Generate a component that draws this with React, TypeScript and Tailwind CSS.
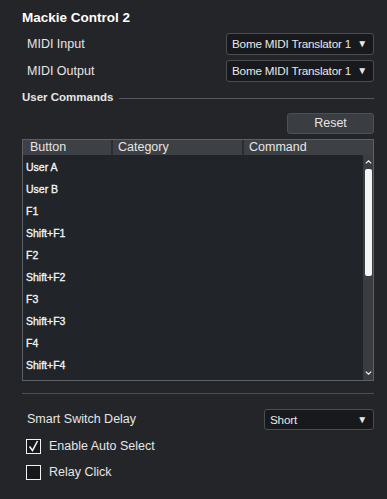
import React from 'react';

const rows = ['User A', 'User B', 'F1', 'Shift+F1', 'F2', 'Shift+F2', 'F3', 'Shift+F3', 'F4', 'Shift+F4'];

function Select({ value, className }: { value: string; className: string }) {
  return (
    <div
      className={`flex items-center justify-between whitespace-nowrap rounded-[3px] border border-[#4a4d52] bg-[#18191c] pl-[5px] pr-[6px] text-[11.7px] tracking-[-0.2px] text-[#e8e8e8] ${className}`}
    >
      <span>{value}</span>
      <span className="text-[10px] leading-none">▼</span>
    </div>
  );
}

function Checkbox({ checked, label }: { checked: boolean; label: string }) {
  return (
    <div className="flex h-[16px] items-center">
      <div className="ml-[4px] flex h-[15px] w-[15px] items-center justify-center border-[1.5px] border-[#f2f2f2] bg-[#17181a]">
        {checked && (
          <svg width="11" height="12" viewBox="0 0 11 12" fill="none">
            <path d="M1.5 6.5 L4.5 10.5 L9.5 1" stroke="#f2f2f2" strokeWidth="1.6" />
          </svg>
        )}
      </div>
      <span className="ml-[8px] text-[12.5px]">{label}</span>
    </div>
  );
}

export default function App() {
  return (
    <div
      className="flex h-[499px] w-[387px] flex-col bg-[#232528] pl-[22px] pr-[13px] pt-[10px] text-[#e6e6e6]"
      style={{ fontFamily: '"Liberation Sans", Arial, sans-serif' }}
    >
      <div className="text-[13.5px] font-bold leading-[16px] text-white">Mackie Control 2</div>

      <div className="mt-[7px] flex items-center justify-between">
        <span className="pl-[5px] text-[12.5px]">MIDI Input</span>
        <Select value="Bome MIDI Translator 1" className="h-[22px] w-[148px]" />
      </div>
      <div className="mt-[5px] flex items-center justify-between">
        <span className="pl-[5px] text-[12.5px]">MIDI Output</span>
        <Select value="Bome MIDI Translator 1" className="h-[22px] w-[148px]" />
      </div>

      <div className="mt-[8px] flex h-[16px] items-center">
        <span className="text-[11.5px] font-bold text-[#e6e6e6]">User Commands</span>
        <div className="ml-[6px] h-px flex-1 bg-[#55585c]" />
      </div>

      <div className="mt-[7px] flex justify-end">
        <div className="flex h-[21px] w-[87px] items-center justify-center rounded-[3px] border border-[#4c4f53] bg-[#3a3d41] text-[12.5px]">
          Reset
        </div>
      </div>

      <div className="mt-[5px] flex h-[242px] flex-col border border-[#5d6064] bg-[#212428]">
        <div className="flex h-[15px] gap-[2px] bg-[#2a2d31] text-[12.5px] leading-[15px]">
          <div className="w-[88px] bg-[#3d4044] pl-[7px]">Button</div>
          <div className="w-[129px] bg-[#3d4044] pl-[5px]">Category</div>
          <div className="flex-1 bg-[#3d4044] pl-[5px]">Command</div>
        </div>
        <div className="flex flex-1">
          <div className="flex flex-1 flex-col pt-[2px]">
            {rows.map((r) => (
              <div
                key={r}
                className="flex h-[22px] items-center pl-[3px] text-[10.5px] text-[#f6f6f6] [-webkit-text-stroke:0.3px_#f6f6f6]"
              >
                {r}
              </div>
            ))}
          </div>
          <div className="flex w-[10px] flex-col items-center bg-[#3a3c40]">
            <svg className="mt-[5px]" width="7" height="4" viewBox="0 0 7 4" fill="none">
              <path d="M0.8 3.4 L3.5 0.8 L6.2 3.4" stroke="#f0f0f0" strokeWidth="1.2" />
            </svg>
            <div className="mt-[5px] h-[107px] w-[7px] rounded-[2px] bg-[#f4f4f4]" />
            <div className="flex-1" />
            <svg className="mb-[5px]" width="7" height="4" viewBox="0 0 7 4" fill="none">
              <path d="M0.8 0.6 L3.5 3.2 L6.2 0.6" stroke="#f0f0f0" strokeWidth="1.2" />
            </svg>
          </div>
        </div>
      </div>

      <div className="mt-[12px] h-px bg-[#4a4d51]" />

      <div className="mt-[15px] flex items-center justify-between">
        <span className="pl-[5px] text-[12.5px]">Smart Switch Delay</span>
        <Select value="Short" className="h-[21px] w-[110px]" />
      </div>

      <div className="mt-[8px]">
        <Checkbox checked label="Enable Auto Select" />
      </div>
      <div className="mt-[10px]">
        <Checkbox checked={false} label="Relay Click" />
      </div>
    </div>
  );
}
